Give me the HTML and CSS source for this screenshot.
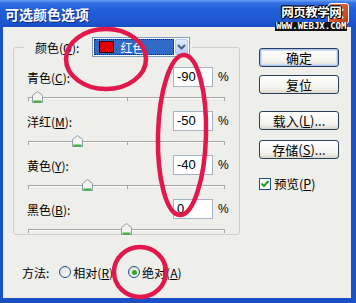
FILE: index.html
```html
<!DOCTYPE html>
<html lang="zh-CN">
<head>
<meta charset="utf-8">
<title>可选颜色选项</title>
<link rel="stylesheet" href="styles.css">
</head>
<body>
<div class="window">
  <div class="titlebar">
    <span class="title">可选颜色选项</span>
    <span class="close"><svg width="11" height="11" viewBox="0 0 11 11"><path d="M1.5 1.5 L9.5 9.5 M9.5 1.5 L1.5 9.5" stroke="#fff" stroke-width="2" stroke-linecap="round"/></svg></span>
    <div class="watermark">
      <div class="wm-cn">网页教学网</div>
      <div class="wm-url">WWW.WEBJX.COM</div>
    </div>
  </div>
  <div class="frame">
    <div class="left">
      <fieldset class="group">
        <legend class="legend">
          <div class="legend-inner">
            <span class="lbl">颜色(<u>O</u>):</span>
            <div class="combo">
              <div class="combo-value"><span class="swatch"></span><span>红色</span></div>
              <div class="combo-btn"><svg width="9" height="6" viewBox="0 0 9 6"><path d="M1 1 L4.5 4.5 L8 1" fill="none" stroke="#4D6185" stroke-width="2"/></svg></div>
            </div>
          </div>
        </legend>

        <div class="channel">
          <div class="row"><span class="lbl">青色(<u>C</u>):</span><span class="num">-90</span><span class="pct">%</span></div>
          <div class="slider"><span class="track"></span><span class="tick t0"></span><span class="tick t1"></span><span class="tick t2"></span>
            <span class="thumb" style="left:5px"><svg width="11" height="12" viewBox="0 0 11 12"><path d="M5.5 0.5 L10.5 4.5 V11.5 H0.5 V4.5 Z" fill="#F4F4EF" stroke="#8A9AAA"/><path d="M1.5 10.5 H9.5" stroke="#3DB03D" stroke-width="2"/></svg></span></div>
        </div>

        <div class="channel">
          <div class="row"><span class="lbl">洋红(<u>M</u>):</span><span class="num">-50</span><span class="pct">%</span></div>
          <div class="slider"><span class="track"></span><span class="tick t0"></span><span class="tick t1"></span><span class="tick t2"></span>
            <span class="thumb" style="left:45px"><svg width="11" height="12" viewBox="0 0 11 12"><path d="M5.5 0.5 L10.5 4.5 V11.5 H0.5 V4.5 Z" fill="#F4F4EF" stroke="#8A9AAA"/><path d="M1.5 10.5 H9.5" stroke="#3DB03D" stroke-width="2"/></svg></span></div>
        </div>

        <div class="channel">
          <div class="row"><span class="lbl">黄色(<u>Y</u>):</span><span class="num">-40</span><span class="pct">%</span></div>
          <div class="slider"><span class="track"></span><span class="tick t0"></span><span class="tick t1"></span><span class="tick t2"></span>
            <span class="thumb" style="left:55px"><svg width="11" height="12" viewBox="0 0 11 12"><path d="M5.5 0.5 L10.5 4.5 V11.5 H0.5 V4.5 Z" fill="#F4F4EF" stroke="#8A9AAA"/><path d="M1.5 10.5 H9.5" stroke="#3DB03D" stroke-width="2"/></svg></span></div>
        </div>

        <div class="channel">
          <div class="row"><span class="lbl">黑色(<u>B</u>):</span><span class="num">0</span><span class="pct">%</span></div>
          <div class="slider"><span class="track"></span><span class="tick t0"></span><span class="tick t1"></span><span class="tick t2"></span>
            <span class="thumb" style="left:94px"><svg width="11" height="12" viewBox="0 0 11 12"><path d="M5.5 0.5 L10.5 4.5 V11.5 H0.5 V4.5 Z" fill="#F4F4EF" stroke="#8A9AAA"/><path d="M1.5 10.5 H9.5" stroke="#3DB03D" stroke-width="2"/></svg></span></div>
        </div>
      </fieldset>

      <div class="method">
        <span class="lbl">方法:</span>
        <span class="radio r1"></span><span class="rlbl">相对(<u>R</u>)</span>
        <span class="radio r2 checked"><span class="dot"></span></span><span class="rlbl">绝对(<u>A</u>)</span>
      </div>
    </div>

    <div class="right">
      <button class="btn default">确定</button>
      <button class="btn b2">复位</button>
      <button class="btn b3">载入(<u>L</u>)...</button>
      <button class="btn b4">存储(<u>S</u>)...</button>
      <div class="check">
        <span class="box"><svg width="10" height="10" viewBox="0 0 10 10"><path d="M1.5 4.5 L4 7 L8.5 2" fill="none" stroke="#21A121" stroke-width="2"/></svg></span>
        <span class="clbl">预览(<u>P</u>)</span>
      </div>
    </div>
  </div>

  <svg class="marks" width="356" height="303" viewBox="0 0 356 303">
    <ellipse cx="106" cy="59" rx="40" ry="30"/>
    <ellipse cx="182" cy="135" rx="24" ry="80" transform="rotate(1.5 182 135)"/>
    <ellipse cx="140" cy="272" rx="26" ry="25"/>
  </svg>
</div>
</body>
</html>
```
FILE: styles.css
```css
* { box-sizing: border-box; }
html, body { margin: 0; padding: 0; }
body {
  width: 356px;
  height: 303px;
  overflow: hidden;
  background: #ffffff;
  font-family: "Noto Sans CJK SC", "Liberation Sans", sans-serif;
  font-size: 12px;
  color: #000;
}
u { text-decoration: underline; text-underline-offset: 1px; }

.window {
  position: relative;
  width: 356px;
  height: 303px;
  display: flex;
  flex-direction: column;
}

.titlebar {
  position: relative;
  flex: none;
  height: 27px;
  display: flex;
  align-items: center;
  padding-left: 5px;
  background: linear-gradient(to bottom, #6AA2F6 0px, #3370E4 3px, #215FD8 10px, #1D58D1 20px, #1A4FC4 27px);
}
.title {
  color: #fff;
  font-weight: bold;
  font-size: 14px;
  line-height: 1;
  text-shadow: 1px 1px 0 #0B2A85;
}
.close {
  position: absolute;
  left: 328px;
  top: 3px;
  width: 21px;
  height: 21px;
  border: 1px solid #fff;
  border-radius: 3px;
  background: linear-gradient(135deg, #F0896A, #D7532E 50%, #C03A18);
  display: flex;
  align-items: center;
  justify-content: center;
}
.watermark {
  position: absolute;
  left: 275px;
  top: 6px;
  display: flex;
  flex-direction: column;
  align-items: center;
  color: #fff;
  line-height: 1;
}
.wm-cn {
  font-size: 12.5px;
  font-weight: bold;
  letter-spacing: -0.5px;
  text-shadow: 1px 0 0 #000, -1px 0 0 #000, 0 1px 0 #000, 0 -1px 0 #000, 1px 1px 0 #000, -1px -1px 0 #000;
}
.wm-url {
  margin-top: 3px;
  font-family: "DejaVu Sans Mono", monospace;
  font-size: 9px;
  font-weight: bold;
  background: #111;
  padding: 0 1px;
}

.frame {
  flex: 1;
  display: flex;
  background: #EEEEEA;
  border-style: solid;
  border-color: #1A4FC6;
  border-width: 0 5px 5px 3px;
}

.left {
  width: 237px;
  padding: 10px 0 0 10px;
}

.group {
  margin: 0;
  min-width: 0;
  padding: 10px 12px 0 13px;
  border: 1px solid #D0CFC7;
  border-radius: 3px;
}
.legend {
  margin-left: -3px;
  padding: 0 2px 0 11px;
}
.legend-inner {
  display: flex;
  align-items: center;
  height: 20px;
}
.lbl { white-space: nowrap; }

.combo {
  display: flex;
  width: 98px;
  height: 20px;
  margin-left: 13px;
  border: 1px solid #7F9DB9;
  background: #fff;
  padding: 1px;
}
.combo-value {
  flex: 1;
  display: flex;
  align-items: center;
  gap: 6px;
  padding-left: 5px;
  background: #316AC5;
  outline: 1px dotted #0F2860;
  outline-offset: -1px;
  color: #fff;
}
.swatch {
  width: 15px;
  height: 12px;
  background: #E00000;
  border: 1px solid #3A0000;
}
.combo-btn {
  width: 13px;
  margin-left: 1px;
  display: flex;
  align-items: center;
  justify-content: center;
  background: linear-gradient(#E1EAFE, #B9CDF7);
  border: 1px solid #B5C8F2;
  border-radius: 2px;
}

.channel { display: flex; flex-direction: column; }
.row {
  display: grid;
  grid-template-columns: 1fr 40px 14px;
  align-items: center;
  height: 20px;
}
.num {
  height: 20px;
  border: 1px solid #A4B2C2;
  background: #fff;
  font-family: "Liberation Sans", sans-serif;
  font-size: 13px;
  line-height: 18px;
  padding-left: 3px;
}
.pct {
  padding-left: 5px;
  font-family: "Liberation Sans", sans-serif;
  font-size: 12px;
}
.slider {
  position: relative;
  height: 10px;
  margin: 5px 0 9px;
}
.channel:last-of-type .slider { margin-bottom: 0; }
.track {
  position: absolute;
  left: 1px;
  top: 5px;
  width: 197px;
  height: 2px;
  border-top: 1px solid #A6A59E;
  border-bottom: 1px solid #FFFFFF;
}
.tick {
  position: absolute;
  top: 5px;
  width: 1px;
  height: 4px;
  background: #A6A59E;
}
.t0 { left: 1px; }
.t1 { left: 100px; }
.t2 { left: 197px; }
.thumb {
  position: absolute;
  top: -1px;
  width: 11px;
  height: 12px;
  display: block;
}
.thumb svg { display: block; }

.method {
  display: flex;
  align-items: center;
  height: 16px;
  margin-top: 29px;
  padding-left: 9px;
}
.radio {
  width: 12px;
  height: 12px;
  border: 1px solid #1C5180;
  border-radius: 50%;
  background: linear-gradient(135deg, #DCDCD5, #FFFFFF);
  display: flex;
  align-items: center;
  justify-content: center;
}
.r1 { margin-left: 10px; }
.r2 { margin-left: 15px; }
.dot {
  width: 5px;
  height: 5px;
  border-radius: 50%;
  background: #2CAA2C;
}
.rlbl { margin-left: 2px; white-space: nowrap; }

.right {
  display: flex;
  flex-direction: column;
  padding: 21px 0 0 19px;
}
.btn {
  width: 80px;
  height: 19px;
  margin: 0;
  padding: 0;
  border: 1px solid #27405E;
  border-radius: 3px;
  background: linear-gradient(#FFFFFF, #F3F3EE 70%, #DCD8CE);
  font-family: "Noto Sans CJK SC", sans-serif;
  font-size: 13px;
  line-height: 1;
  color: #000;
  display: flex;
  align-items: center;
  justify-content: center;
}
.btn.default { box-shadow: inset 0 0 0 1px #A9C2F0, inset 0 0 0 2px #D2DFF8; }
.b2 { margin-top: 8px; }
.b3 { margin-top: 17px; }
.b4 { margin-top: 10px; }
.check {
  display: flex;
  align-items: center;
  margin-top: 15px;
}
.box {
  width: 12px;
  height: 12px;
  border: 1px solid #1C5180;
  background: #fff;
  display: flex;
  align-items: center;
  justify-content: center;
}
.clbl { margin-left: 3px; font-size: 12.5px; }

.marks {
  position: absolute;
  left: 0;
  top: 0;
  pointer-events: none;
}
.marks ellipse {
  fill: none;
  stroke: #E2174B;
  stroke-width: 4.5;
}
```
